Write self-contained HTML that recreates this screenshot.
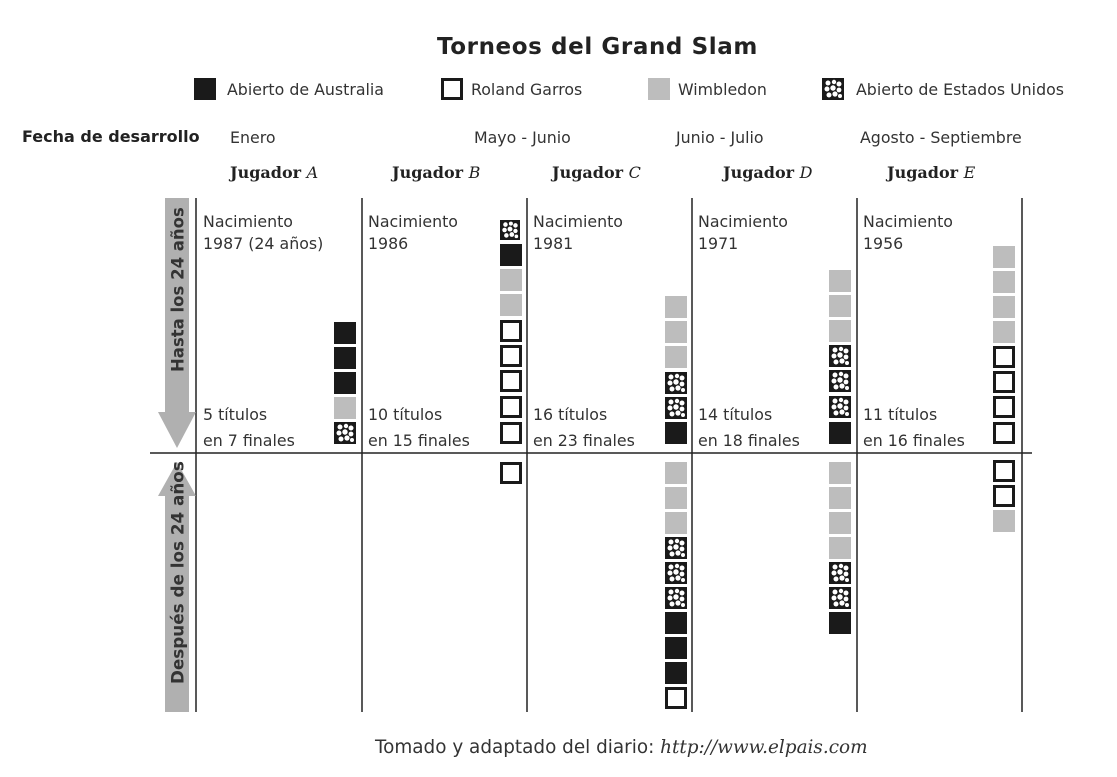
<!DOCTYPE html>
<html><head><meta charset="utf-8"><style>
body{margin:0;width:1117px;height:777px;background:#fff;position:relative;overflow:hidden;font-family:"DejaVu Sans","Liberation Sans",sans-serif;color:#333}
.t{position:absolute;white-space:nowrap;font-size:15.8px;line-height:18px}
.b{font-weight:bold;color:#222}
.j{font-family:"DejaVu Serif","Liberation Serif",serif;font-weight:bold;font-size:16px;color:#222}
.j i{font-weight:normal}
</style></head><body>
<svg width="1117" height="777" style="position:absolute;left:0;top:0">
<defs>
<symbol id="us" viewBox="0 0 22 22"><rect width="22" height="22" fill="#1a1a1a"/>
<g fill="#fff"><circle cx="6" cy="5" r="2.5"/><circle cx="12" cy="4" r="2.2"/><circle cx="17" cy="6" r="2.5"/><circle cx="5" cy="11" r="2.5"/><circle cx="11" cy="10" r="2.7"/><circle cx="17" cy="12" r="2.4"/><circle cx="7" cy="17" r="2.5"/><circle cx="13" cy="16" r="2.6"/><circle cx="18" cy="18" r="2"/></g></symbol>
<symbol id="au" viewBox="0 0 22 22"><rect width="22" height="22" fill="#1a1a1a"/></symbol>
<symbol id="rg" viewBox="0 0 22 22"><rect x="1.5" y="1.5" width="19" height="19" fill="#fff" stroke="#1a1a1a" stroke-width="3"/></symbol>
<symbol id="wi" viewBox="0 0 22 22"><rect width="22" height="22" fill="#bdbdbd"/></symbol>
</defs>
<g stroke="#222" stroke-width="1.5">
<line x1="196" y1="198" x2="196" y2="712"/><line x1="362" y1="198" x2="362" y2="712"/><line x1="527" y1="198" x2="527" y2="712"/><line x1="692" y1="198" x2="692" y2="712"/><line x1="857" y1="198" x2="857" y2="712"/><line x1="1022" y1="198" x2="1022" y2="712"/>
<line x1="150" y1="453" x2="1032" y2="453"/>
</g>
<polygon points="165,198 189,198 189,412 196,412 177,448 158,412 165,412" fill="#b0b0b0"/>
<polygon points="165,712 189,712 189,496 196,496 177,462 158,496 165,496" fill="#b0b0b0"/>
<use href="#au" x="194" y="78" width="22" height="22"/>
<use href="#rg" x="441" y="78" width="22" height="22"/>
<use href="#wi" x="648" y="78" width="22" height="22"/>
<use href="#us" x="822" y="78" width="22" height="22"/>
<use href="#au" x="334" y="322" width="22" height="22"/><use href="#au" x="334" y="347" width="22" height="22"/><use href="#au" x="334" y="372" width="22" height="22"/><use href="#wi" x="334" y="397" width="22" height="22"/><use href="#us" x="334" y="422" width="22" height="22"/>
<use href="#us" x="500" y="220" width="20" height="20"/><use href="#au" x="500" y="244" width="22" height="22"/><use href="#wi" x="500" y="269" width="22" height="22"/><use href="#wi" x="500" y="294" width="22" height="22"/><use href="#rg" x="500" y="320" width="22" height="22"/><use href="#rg" x="500" y="345" width="22" height="22"/><use href="#rg" x="500" y="370" width="22" height="22"/><use href="#rg" x="500" y="396" width="22" height="22"/><use href="#rg" x="500" y="422" width="22" height="22"/>
<use href="#rg" x="500" y="462" width="22" height="22"/>
<use href="#wi" x="665" y="296" width="22" height="22"/><use href="#wi" x="665" y="321" width="22" height="22"/><use href="#wi" x="665" y="346" width="22" height="22"/><use href="#us" x="665" y="372" width="22" height="22"/><use href="#us" x="665" y="397" width="22" height="22"/><use href="#au" x="665" y="422" width="22" height="22"/>
<use href="#wi" x="665" y="462" width="22" height="22"/><use href="#wi" x="665" y="487" width="22" height="22"/><use href="#wi" x="665" y="512" width="22" height="22"/><use href="#us" x="665" y="537" width="22" height="22"/><use href="#us" x="665" y="562" width="22" height="22"/><use href="#us" x="665" y="587" width="22" height="22"/><use href="#au" x="665" y="612" width="22" height="22"/><use href="#au" x="665" y="637" width="22" height="22"/><use href="#au" x="665" y="662" width="22" height="22"/><use href="#rg" x="665" y="687" width="22" height="22"/>
<use href="#wi" x="829" y="270" width="22" height="22"/><use href="#wi" x="829" y="295" width="22" height="22"/><use href="#wi" x="829" y="320" width="22" height="22"/><use href="#us" x="829" y="345" width="22" height="22"/><use href="#us" x="829" y="370" width="22" height="22"/><use href="#us" x="829" y="396" width="22" height="22"/><use href="#au" x="829" y="422" width="22" height="22"/>
<use href="#wi" x="829" y="462" width="22" height="22"/><use href="#wi" x="829" y="487" width="22" height="22"/><use href="#wi" x="829" y="512" width="22" height="22"/><use href="#wi" x="829" y="537" width="22" height="22"/><use href="#us" x="829" y="562" width="22" height="22"/><use href="#us" x="829" y="587" width="22" height="22"/><use href="#au" x="829" y="612" width="22" height="22"/>
<use href="#wi" x="993" y="246" width="22" height="22"/><use href="#wi" x="993" y="271" width="22" height="22"/><use href="#wi" x="993" y="296" width="22" height="22"/><use href="#wi" x="993" y="321" width="22" height="22"/><use href="#rg" x="993" y="346" width="22" height="22"/><use href="#rg" x="993" y="371" width="22" height="22"/><use href="#rg" x="993" y="396" width="22" height="22"/><use href="#rg" x="993" y="422" width="22" height="22"/>
<use href="#rg" x="993" y="460" width="22" height="22"/><use href="#rg" x="993" y="485" width="22" height="22"/><use href="#wi" x="993" y="510" width="22" height="22"/>
<text x="0" y="0" transform="translate(183.5,372) rotate(-90)" font-family="DejaVu Sans,sans-serif" font-weight="bold" font-size="16.5" fill="#333">Hasta los 24 años</text>
<text x="0" y="0" transform="translate(183.5,684) rotate(-90)" font-family="DejaVu Sans,sans-serif" font-weight="bold" font-size="16.8" fill="#333">Después de los 24 años</text>
</svg>

<div class="t b" style="left:437px;top:34px;font-size:23px;line-height:27px;letter-spacing:0.6px">Torneos del Grand Slam</div>
<div class="t" style="left:227px;top:81px">Abierto de Australia</div>
<div class="t" style="left:471px;top:81px">Roland Garros</div>
<div class="t" style="left:678px;top:81px">Wimbledon</div>
<div class="t" style="left:856px;top:81px">Abierto de Estados Unidos</div>

<div class="t b" style="left:22px;top:128px;font-size:16px">Fecha de desarrollo</div>
<div class="t" style="left:230px;top:129px">Enero</div>
<div class="t" style="left:474px;top:129px">Mayo - Junio</div>
<div class="t" style="left:676px;top:129px">Junio - Julio</div>
<div class="t" style="left:860px;top:129px">Agosto - Septiembre</div>

<div class="t j" style="left:230px;top:164px">Jugador <i>A</i></div>
<div class="t j" style="left:392px;top:164px">Jugador <i>B</i></div>
<div class="t j" style="left:552px;top:164px">Jugador <i>C</i></div>
<div class="t j" style="left:723px;top:164px">Jugador <i>D</i></div>
<div class="t j" style="left:887px;top:164px">Jugador <i>E</i></div>

<div class="t" style="left:203px;top:211px;line-height:22px">Nacimiento<br>1987 (24 años)</div>
<div class="t" style="left:368px;top:211px;line-height:22px">Nacimiento<br>1986</div>
<div class="t" style="left:533px;top:211px;line-height:22px">Nacimiento<br>1981</div>
<div class="t" style="left:698px;top:211px;line-height:22px">Nacimiento<br>1971</div>
<div class="t" style="left:863px;top:211px;line-height:22px">Nacimiento<br>1956</div>

<div class="t" style="left:203px;top:402px;line-height:26px">5 títulos<br>en 7 finales</div>
<div class="t" style="left:368px;top:402px;line-height:26px">10 títulos<br>en 15 finales</div>
<div class="t" style="left:533px;top:402px;line-height:26px">16 títulos<br>en 23 finales</div>
<div class="t" style="left:698px;top:402px;line-height:26px">14 títulos<br>en 18 finales</div>
<div class="t" style="left:863px;top:402px;line-height:26px">11 títulos<br>en 16 finales</div>

<div class="t" style="left:375px;top:737px;font-size:18.4px;line-height:22px">Tomado y adaptado del diario: <i style="font-family:'DejaVu Serif','Liberation Serif',serif;font-size:18.4px">http://www.elpais.com</i></div>
</body></html>
